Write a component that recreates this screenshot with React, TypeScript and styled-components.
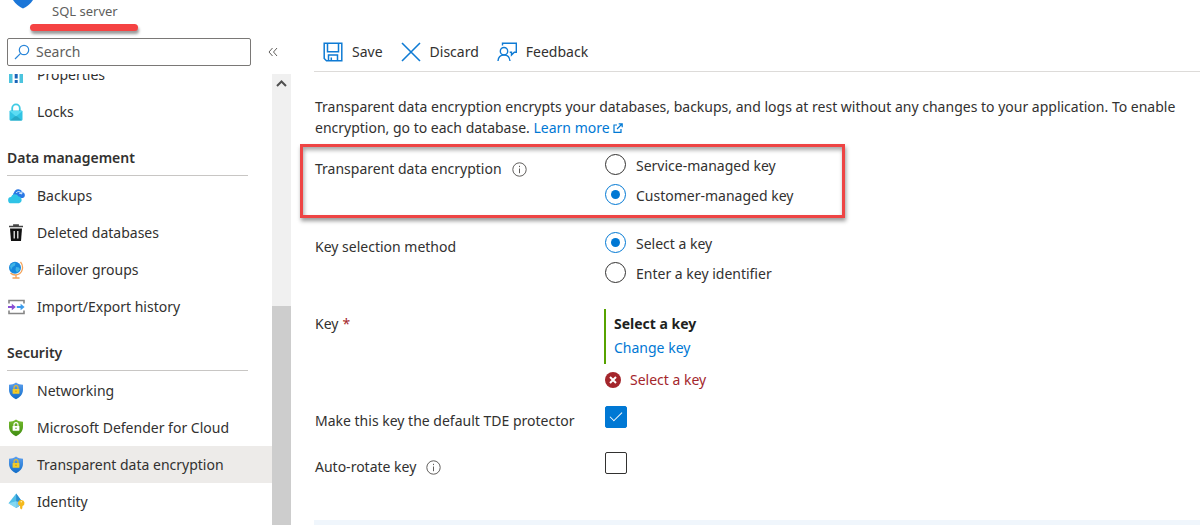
import React from "react";
import styled, { createGlobalStyle, css } from "styled-components";

const GlobalStyle = createGlobalStyle`
  *, *::before, *::after { box-sizing: border-box; }
  body {
    margin: 0;
    background: #fff;
    color: #323130;
    font-family: "Noto Sans", "Open Sans", sans-serif;
    font-size: 14px;
    line-height: 20px;
  }
  button, input { font: inherit; color: inherit; }
`;

const Shell = styled.div`
  display: flex;
  height: 100vh;
  overflow: hidden;
`;

const Sidebar = styled.aside`
  display: flex;
  flex-direction: column;
  flex: 0 0 291px;
  min-height: 0;
`;

const ResourceHeader = styled.header`
  display: flex;
  align-items: flex-start;
  gap: 18px;
  height: 38px;
  padding-left: 12px;
`;

const ResourceType = styled.div`
  position: relative;
  padding-top: 2px;
  color: #605e5c;
  font-size: 13px;
  line-height: 18px;

  &::after {
    content: "";
    position: absolute;
    top: 24px;
    left: -22px;
    width: 108px;
    height: 7px;
    border-radius: 4px;
    background: #f54343;
    box-shadow: 1px 3px 3px rgba(0, 0, 0, 0.4);
  }
`;

const SearchRow = styled.div`
  display: flex;
  align-items: center;
  gap: 16px;
  padding: 0 12px 8px 7px;
`;

const SearchBox = styled.label`
  display: flex;
  align-items: center;
  gap: 6px;
  flex: 0 0 244px;
  height: 28px;
  padding: 0 6px;
  border: 1px solid #7a7876;
  border-radius: 2px;
`;

const SearchInput = styled.input`
  flex: 1;
  min-width: 0;
  padding: 0;
  border: 0;
  outline: 0;
  background: none;

  &::placeholder { color: #605e5c; opacity: 1; }
`;

const CollapseButton = styled.button`
  display: flex;
  padding: 0;
  border: 0;
  background: none;
`;

const MenuArea = styled.div`
  display: flex;
  flex: 1;
  min-height: 0;
  overflow: hidden;
`;

const Menu = styled.nav`
  flex: 1;
  min-width: 0;
  margin-top: -18px;
`;

const ScrollTrack = styled.div`
  display: flex;
  flex-direction: column;
  align-items: center;
  justify-content: space-between;
  flex: 0 0 19px;
  padding-top: 5px;
  background: #f0f0f0;
`;

const ScrollThumb = styled.div`
  width: 100%;
  height: 49%;
  background: #cdcdcd;
`;

const SectionTitle = styled.h2`
  height: 46px;
  margin: 0 24px 1px 7px;
  padding-top: 18px;
  border-bottom: 1px solid #c8c6c4;
  font-size: 14px;
  font-weight: 600;
  line-height: 20px;
`;

const MenuList = styled.ul`
  margin: 0;
  padding: 0;
  list-style: none;
`;

const MenuLink = styled.a<{ $active?: boolean }>`
  display: flex;
  align-items: center;
  gap: 12px;
  height: 37px;
  padding-left: 8px;
  background: ${(p) => (p.$active ? "#edebe9" : "transparent")};
  color: inherit;
  text-decoration: none;
`;

const MenuIcon = styled.span`
  display: flex;
  flex: 0 0 17px;
`;

const Main = styled.main`
  display: flex;
  flex-direction: column;
  flex: 1;
  min-width: 0;
  padding: 32px 0 0 23px;
`;

const Toolbar = styled.div`
  display: flex;
  gap: 18px;
  height: 40px;
  padding-left: 9px;
  border-bottom: 1px solid #dddbd9;
`;

const ToolButton = styled.button`
  display: flex;
  align-items: center;
  gap: 9px;
  height: 40px;
  padding: 0;
  border: 0;
  background: none;
`;

const Intro = styled.p`
  margin: 24px 16px 16px 1px;
  line-height: 21px;
`;

const Link = styled.a`
  color: #0078d4;
  text-decoration: none;
`;

const Form = styled.form`
  display: flex;
  flex-direction: column;
  padding-left: 1px;
`;

const fieldGrid = css`
  display: grid;
  grid-template-columns: 290px 1fr;
  align-items: start;
`;

const Field = styled.div<{ $gap: number; $marked?: boolean }>`
  ${fieldGrid}
  position: relative;
  margin-bottom: ${(p) => p.$gap}px;

  ${(p) =>
    p.$marked &&
    css`
      &::after {
        content: "";
        position: absolute;
        top: -10px;
        left: -15px;
        width: 545px;
        height: 74px;
        border: 3px solid #ee4444;
        box-shadow: 1px 3px 4px rgba(0, 0, 0, 0.4), inset 1px 3px 4px rgba(0, 0, 0, 0.35);
        pointer-events: none;
      }
    `}
`;

const FieldLabel = styled.label`
  display: flex;
  align-items: center;
  gap: 10px;
  padding-top: 5px;
`;

const Required = styled.span`
  margin-left: -6px;
  color: #a4262c;
`;

const Options = styled.div`
  display: flex;
  flex-direction: column;
  gap: 9px;
`;

const Option = styled.label`
  display: flex;
  align-items: center;
  gap: 10px;
  height: 21px;
`;

const OptionText = styled.span`
  padding-top: 2px;
`;

const Radio = styled.input`
  display: grid;
  place-content: center;
  flex: none;
  width: 21px;
  height: 21px;
  margin: 0;
  border: 1px solid #323130;
  border-radius: 50%;
  appearance: none;

  &:checked { border-color: #0078d4; }
  &:checked::before {
    content: "";
    width: 9px;
    height: 9px;
    border-radius: 50%;
    background: #0078d4;
  }
`;

const Check = styled.input`
  display: grid;
  place-content: center;
  width: 22px;
  height: 22px;
  margin: 0;
  border: 1px solid #323130;
  border-radius: 2px;
  appearance: none;

  &:checked {
    border-color: #0078d4;
    background: #0078d4;
  }
  &:checked::before {
    content: "";
    width: 12px;
    height: 6px;
    margin-bottom: 4px;
    border: solid #fff;
    border-width: 0 0 1px 1px;
    transform: rotate(-45deg);
  }
`;

const KeyValue = styled.div`
  display: flex;
  flex-direction: column;
  gap: 4px;
  margin-left: -1px;
  padding: 5px 0 6px 8px;
  border-left: 2px solid #57a300;
`;

const KeyName = styled.strong`
  color: #201f1e;
  font-weight: 700;
`;

const ErrorText = styled.div`
  display: flex;
  align-items: center;
  gap: 9px;
  margin-top: 6px;
  color: #a4262c;
`;

const Banner = styled.div`
  flex: 1 0 5px;
  background: #f0f6fc;
`;

const ShieldIcon = ({ green }: { green?: boolean }) => {
  const id = green ? "shield-green" : "shield-blue";
  return (
    <svg width="16" height="18" viewBox="0 0 16 18" aria-hidden="true">
      <defs>
        <linearGradient id={id} x1="0" y1="0" x2="0" y2="1">
          <stop offset="0" stopColor={green ? "#76bc2d" : "#5ea0ef"} />
          <stop offset="1" stopColor={green ? "#3f8c12" : "#0f6cc8"} />
        </linearGradient>
      </defs>
      <path d="M8 .5C6 2.200 3.500 2.600 1 2.700V8c0 4.500 3.500 7.500 7 9.300 3.500-1.800 7-4.800 7-9.300V2.700C12.500 2.600 10 2.200 8 .5Z" fill={`url(#${id})`} />
      <path d="M6 7.500V5.700a2 2 0 0 1 4 0v1.800" fill="none" stroke={green ? "#fff" : "#e8b92c"} strokeWidth="1.200" />
      <rect x="4.600" y="7" width="6.800" height="4.800" rx=".6" fill={green ? "#fff" : "#f2cb2a"} />
      <circle cx="8" cy="9.200" r=".7" fill={green ? "#4d9a1c" : "#c69212"} />
    </svg>
  );
};

const HeaderShield = () => (
  <svg width="22" height="9" viewBox="0 0 22 9" aria-hidden="true">
    <path d="M1 0h20C18.500 4 15 6.500 11 8.500 7 6.500 3.500 4 1 0Z" fill="#1b76d8" />
  </svg>
);

const SearchIcon = () => (
  <svg width="16" height="16" viewBox="0 0 16 16" fill="none" stroke="#2a86d9" strokeWidth="1.200" aria-hidden="true">
    <circle cx="10" cy="6" r="4.700" />
    <path d="M6.600 9.400 1 15" />
  </svg>
);

const PropertiesIcon = () => (
  <svg width="16" height="16" viewBox="0 0 16 16" aria-hidden="true">
    <path d="M1 1h3.500v15H1zM11.500 1H15v15h-3.500z" fill="#4cc4de" />
    <path d="M6.700 1h3v10.500h-3z" fill="#1b63b8" />
    <path d="M6.700 13h3v3h-3z" fill="#1b63b8" />
  </svg>
);

const LockIcon = () => (
  <svg width="16" height="18" viewBox="0 0 16 18" aria-hidden="true">
    <path d="M4.200 9V5.200a3.800 3.800 0 0 1 7.600 0V9" fill="none" stroke="#3fcbe4" strokeWidth="1.800" />
    <rect x="1.500" y="7.500" width="13" height="10" rx="1" fill="#32c4e4" />
    <path d="m2 17.500 6-5 6 5Z" fill="#27a9c6" />
    <path d="m1.500 8 6.500 5.500L14.500 8Z" fill="#5bdcf3" />
  </svg>
);

const BackupIcon = () => (
  <svg width="17" height="16" viewBox="0 0 17 16" aria-hidden="true">
    <path d="M8 10a3.300 3.300 0 0 1-2-5.500A4.500 4.500 0 0 1 14.500 4a3.200 3.200 0 0 1 .5 6Z" fill="#2a78e4" />
    <path d="M8 5c2-2.300 4.500-1.800 5.500.5m.7-2.500-.5 3-2.700-1" fill="none" stroke="#d7ecff" strokeWidth="1" />
    <path d="M3.500 15.300a3.100 3.100 0 0 1-.5-6.200 4 4 0 0 1 7.500-.5 3.400 3.400 0 0 1 .5 6.700Z" fill="#2fc3e6" />
  </svg>
);

const TrashIcon = () => (
  <svg width="16" height="18" viewBox="0 0 16 18" aria-hidden="true">
    <path d="M1 2.500h14M5.800 2V1h4.400v1" fill="none" stroke="#444" strokeWidth="1.400" />
    <path d="M2 4.500h12L13 17H3Z" fill="#111" />
    <path d="M6.200 7v7.500M9.800 7v7.500" stroke="#fff" strokeWidth="1.200" />
  </svg>
);

const GlobeIcon = () => (
  <svg width="16" height="18" viewBox="0 0 16 18" aria-hidden="true">
    <path d="M12.500.8c3.600 4.500 2.500 12.700-5 13.200-2.500 0-4-1-5-2M8 14v3M4.500 17h7" fill="none" stroke="#f4a35a" strokeWidth="1.300" />
    <circle cx="7" cy="6.800" r="6" fill="#1688dc" />
    <path d="M2 5c2-3 4-3.500 5.500-3.300L7 4.500 4.500 6 3 9ZM8 6l3 .5 1 2-3 3L7.500 9Z" fill="#3fb4e6" />
  </svg>
);

const TransferIcon = () => (
  <svg width="17" height="16" viewBox="0 0 17 16" aria-hidden="true">
    <path d="M1 4.500V1.500h15v3M1 11.500v3h15v-3" fill="none" stroke="#858585" strokeWidth="1.600" />
    <path d="M0 7h3.800V4.700L7.800 8l-4 3.300V9H0Z" fill="#8a4fd3" />
    <path d="M8.800 7h3.800V4.700l4 3.300-4 3.300V9H8.800Z" fill="#3c9cec" />
  </svg>
);

const IdentityIcon = () => (
  <svg width="17" height="17" viewBox="0 0 17 17" aria-hidden="true">
    <path d="M8.200.5.5 10.300l7.700 4.700 7-4.700Z" fill="#50bfe8" />
    <path d="m8.200.5 7 9.800-7 4.700Z" fill="#2b8fd0" />
    <path d="m.5 10.300 7.700-2 7 2-7 4.700Z" fill="#9be3f6" opacity=".7" />
    <path d="M13.500 7a3.100 3.100 0 0 1 1 6l-.2 2.200-1 1.300-1.200-1.200V13a3.100 3.100 0 0 1 1.400-6Z" fill="#f5b91c" />
    <circle cx="13.300" cy="8.800" r=".8" fill="#fff2b5" />
  </svg>
);

const SaveIcon = () => (
  <svg width="20" height="20" viewBox="0 0 20 20" fill="none" stroke="#0f7bd4" strokeWidth="1.500" aria-hidden="true">
    <path d="M1.200 1.200h17.600v17.600H3.500l-2.300-2.300Z" />
    <path d="M4.500 1.500v8.200h11V1.500M5.500 18.500v-5.500h9v5.500M8.300 15.500v3" />
  </svg>
);

const DiscardIcon = () => (
  <svg width="20" height="20" viewBox="0 0 20 20" stroke="#0f7bd4" strokeWidth="1.600" aria-hidden="true">
    <path d="m1 1 18 18M19 1 1 19" />
  </svg>
);

const FeedbackIcon = () => (
  <svg width="20" height="20" viewBox="0 0 20 20" fill="none" stroke="#0f7bd4" strokeWidth="1.400" aria-hidden="true">
    <circle cx="7" cy="9.200" r="3.700" />
    <path d="M1 19c.3-3.800 2.700-6 6-6s5.700 2.200 6 6" />
    <path d="M5.500 3.500V1.200h13.800v9h-2L14.500 13v-2.800h-1.800" />
  </svg>
);

const InfoIcon = () => (
  <svg width="15" height="15" viewBox="0 0 15 15" fill="none" stroke="#605e5c" aria-hidden="true">
    <circle cx="7.500" cy="7.500" r="6.700" />
    <path d="M7.500 6.500v4.700M7.500 3.800v1.300" />
  </svg>
);

const ExternalIcon = () => (
  <svg width="10" height="10" viewBox="0 0 10 10" fill="none" stroke="#0078d4" strokeWidth="1.200" aria-hidden="true">
    <path d="M4 2H1v7.300h7V6M5.700.8h3.500v3.500M9 1 4 6" />
  </svg>
);

const ErrorIcon = () => (
  <svg width="16" height="16" viewBox="0 0 16 16" aria-hidden="true">
    <circle cx="8" cy="8" r="8" fill="#a4262c" />
    <path d="m5 5 6 6m0-6-6 6" stroke="#fff" strokeWidth="2" />
  </svg>
);

type Item = { label: string; icon: React.ReactNode; active?: boolean };

const general: Item[] = [
  { label: "Properties", icon: <PropertiesIcon /> },
  { label: "Locks", icon: <LockIcon /> },
];

const dataManagement: Item[] = [
  { label: "Backups", icon: <BackupIcon /> },
  { label: "Deleted databases", icon: <TrashIcon /> },
  { label: "Failover groups", icon: <GlobeIcon /> },
  { label: "Import/Export history", icon: <TransferIcon /> },
];

const security: Item[] = [
  { label: "Networking", icon: <ShieldIcon /> },
  { label: "Microsoft Defender for Cloud", icon: <ShieldIcon green /> },
  { label: "Transparent data encryption", icon: <ShieldIcon />, active: true },
  { label: "Identity", icon: <IdentityIcon /> },
];

const MenuItems = ({ items }: { items: Item[] }) => (
  <MenuList>
    {items.map((item) => (
      <li key={item.label}>
        <MenuLink href="#" $active={item.active} aria-current={item.active ? "page" : undefined}>
          <MenuIcon>{item.icon}</MenuIcon>
          {item.label}
        </MenuLink>
      </li>
    ))}
  </MenuList>
);

export default function App() {
  return (
    <>
      <GlobalStyle />
      <Shell>
        <Sidebar>
          <ResourceHeader>
            <HeaderShield />
            <ResourceType>SQL server</ResourceType>
          </ResourceHeader>
          <SearchRow>
            <SearchBox>
              <SearchIcon />
              <SearchInput type="text" placeholder="Search" aria-label="Search" />
            </SearchBox>
            <CollapseButton type="button" aria-label="Collapse menu">
              <svg width="12" height="12" viewBox="0 0 12 12" fill="none" stroke="#605e5c">
                <path d="M5.500 2 2 6l3.500 4M10 2 6.500 6l3.500 4" />
              </svg>
            </CollapseButton>
          </SearchRow>
          <MenuArea>
            <Menu>
              <MenuItems items={general} />
              <SectionTitle>Data management</SectionTitle>
              <MenuItems items={dataManagement} />
              <SectionTitle>Security</SectionTitle>
              <MenuItems items={security} />
            </Menu>
            <ScrollTrack>
              <svg width="11" height="9" viewBox="0 0 11 9" fill="none" stroke="#505050" strokeWidth="2" aria-hidden="true">
                <path d="m1 7 4.500-4.500L10 7" />
              </svg>
              <ScrollThumb />
            </ScrollTrack>
          </MenuArea>
        </Sidebar>

        <Main>
          <Toolbar>
            <ToolButton type="button"><SaveIcon />Save</ToolButton>
            <ToolButton type="button"><DiscardIcon />Discard</ToolButton>
            <ToolButton type="button"><FeedbackIcon />Feedback</ToolButton>
          </Toolbar>
          <Intro>
            Transparent data encryption encrypts your databases, backups, and logs at rest without any changes to your
            application. To enable encryption, go to each database.{" "}
            <Link href="#">Learn more <ExternalIcon /></Link>
          </Intro>
          <Form>
            <Field $gap={27} $marked role="radiogroup" aria-labelledby="tde-label">
              <FieldLabel as="div" id="tde-label">Transparent data encryption <InfoIcon /></FieldLabel>
              <Options>
                <Option><Radio type="radio" name="tde" /><OptionText>Service-managed key</OptionText></Option>
                <Option><Radio type="radio" name="tde" defaultChecked /><OptionText>Customer-managed key</OptionText></Option>
              </Options>
            </Field>
            <Field $gap={26} role="radiogroup" aria-labelledby="method-label">
              <FieldLabel as="div" id="method-label">Key selection method</FieldLabel>
              <Options>
                <Option><Radio type="radio" name="method" defaultChecked /><OptionText>Select a key</OptionText></Option>
                <Option><Radio type="radio" name="method" /><OptionText>Enter a key identifier</OptionText></Option>
              </Options>
            </Field>
            <Field $gap={16}>
              <FieldLabel as="div">Key <Required>*</Required></FieldLabel>
              <div>
                <KeyValue>
                  <KeyName>Select a key</KeyName>
                  <Link href="#">Change key</Link>
                </KeyValue>
                <ErrorText role="alert"><ErrorIcon />Select a key</ErrorText>
              </div>
            </Field>
            <Field $gap={21}>
              <FieldLabel htmlFor="default-protector">Make this key the default TDE protector</FieldLabel>
              <Check id="default-protector" type="checkbox" defaultChecked />
            </Field>
            <Field $gap={43}>
              <FieldLabel htmlFor="auto-rotate">Auto-rotate key <InfoIcon /></FieldLabel>
              <Check id="auto-rotate" type="checkbox" />
            </Field>
          </Form>
          <Banner />
        </Main>
      </Shell>
    </>
  );
}
